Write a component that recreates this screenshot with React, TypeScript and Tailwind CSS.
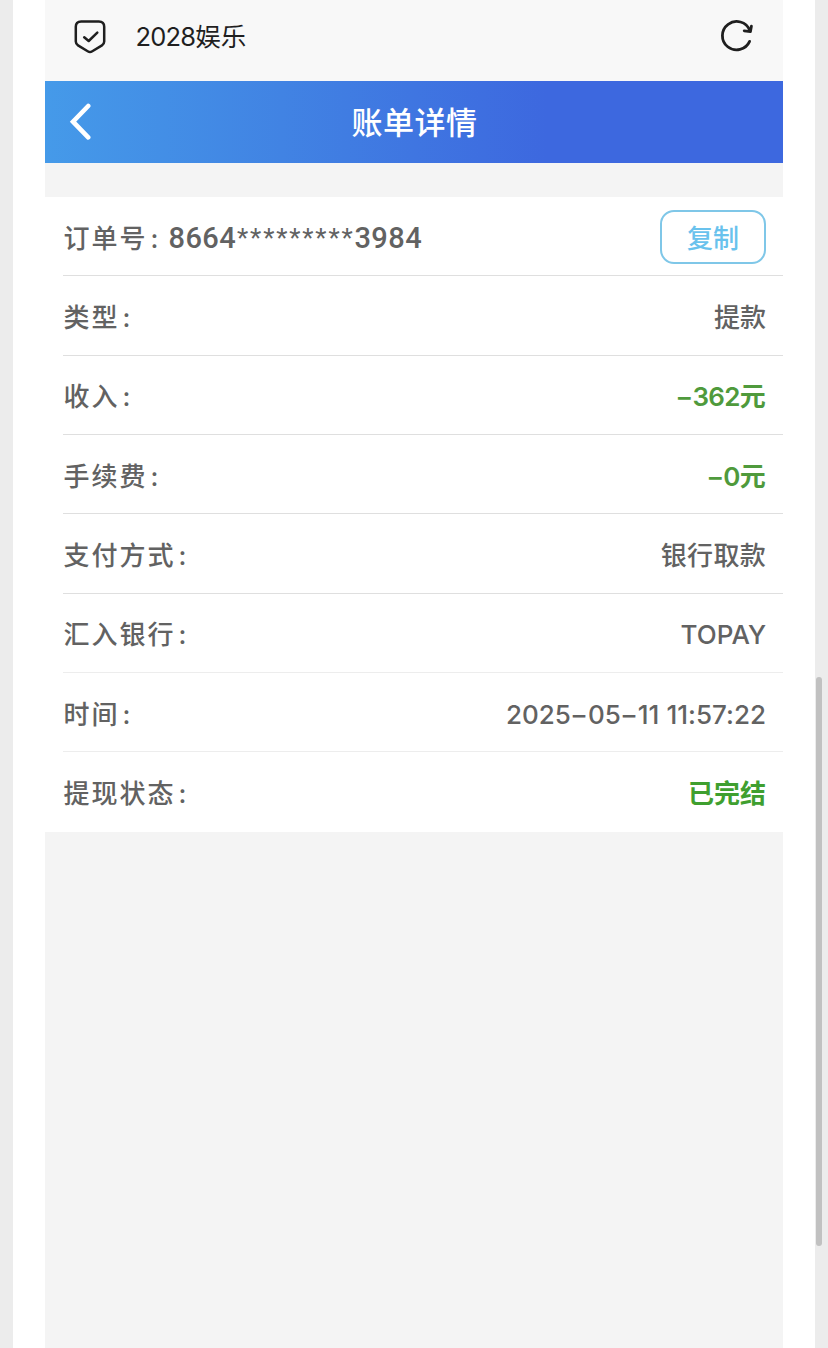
import { clsx } from 'clsx';

interface BillRow {
  label: string;
  value: string;
  valueClass: string;
}

const rows: BillRow[] = [
  { label: '类型', value: '提款', valueClass: 'text-[#626262]' },
  { label: '收入', value: '-362元', valueClass: 'pr-[1px] font-semibold text-[#4f9a3c] tracking-[-0.7px]' },
  { label: '手续费', value: '-0元', valueClass: 'pr-[1px] font-semibold text-[#4f9a3c] tracking-[-0.7px]' },
  { label: '支付方式', value: '银行取款', valueClass: 'text-[#626262] tracking-[0.3px]' },
  { label: '汇入银行', value: 'TOPAY', valueClass: 'text-[#626262] tracking-[0px]' },
  { label: '时间', value: '2025-05-11 11:57:22', valueClass: 'text-[#626262] tracking-[0.02px]' },
  { label: '提现状态', value: '已完结', valueClass: 'font-semibold text-[#3f9f2f]' },
];

function Label({ text }: { text: string }) {
  return (
    <span className="flex pl-[0.5px] text-[26px] tracking-[2px]">
      {text}
      <span className="w-[21px] pl-[3px]">:</span>
    </span>
  );
}

// hyphens are drawn wider than the font has them
function Value({ text }: { text: string }) {
  return (
    <span className="whitespace-pre">
      {text.split(/(-)/).map((part, i) =>
        part === '-' ? (
          <span key={i} className="inline-block w-[17px] text-center">
            <span className="inline-block scale-x-150">-</span>
          </span>
        ) : (
          part
        )
      )}
    </span>
  );
}

export default function App() {
  return (
    <div className="relative flex h-[1348px] w-[828px] justify-center overflow-hidden bg-[#ececec] pl-[13px] pr-[13px] font-['Inter','Noto_Sans_CJK_SC',sans-serif]">
      <div className="w-[802px] bg-white px-8">
        <div className="flex h-full w-[738px] flex-col bg-[#f4f4f4]">
          <div className="flex h-[81px] shrink-0 items-start bg-[#f8f8f8] pl-[29px] pr-[29px] pt-[18px] text-[#1f1f1f]">
            <svg width="32" height="37" viewBox="0 0 32 37" fill="none" stroke="currentColor" strokeWidth="2.5" strokeLinecap="round" strokeLinejoin="round">
              <path d="M7.2 3.4h17.6q5.4 0 5.4 5.4v14.8q0 2.5-2.2 3.8l-9.7 5.9q-2.3 1.4-4.6 0L4 27.4q-2.2-1.3-2.2-3.8V8.8q0-5.4 5.4-5.4z" />
              <path d="M10.2 19.2l4.5 3.8 8.6-8.3" />
            </svg>
            <span className="ml-[29.5px] flex-1 text-[25.5px] leading-[37px]">
              <span className="tracking-[-0.8px]">2028</span>娱乐
            </span>
            <svg width="34" height="36" viewBox="0 0 34 36" fill="none" stroke="currentColor" strokeWidth="2.8" strokeLinecap="round" strokeLinejoin="round">
              <path d="M29.6 23.4A14.2 14.2 0 1 1 29.8 12.4" />
              <path d="M24.2 12.8l6.2.9 1-5.5" />
            </svg>
          </div>

          <div className="flex h-[82px] shrink-0 items-center bg-[linear-gradient(90deg,#459ae9_0%,#4183e3_32%,#3d68df_68%,#3d68df_100%)] text-white">
            <svg className="ml-[24px]" width="24" height="38" viewBox="0 0 24 38" fill="none" stroke="currentColor" strokeWidth="4.6" strokeLinecap="round" strokeLinejoin="miter">
              <path d="M19.2 3L4 18.7l15.2 15.7" />
            </svg>
            <h1 className="flex-1 pr-[47px] text-center text-[31px] font-medium leading-none tracking-[0.5px]">账单详情</h1>
          </div>

          <div className="mt-[34px] grid h-[634.5px] shrink-0 grid-rows-8 bg-white pl-[18px] text-[26px] font-medium leading-none text-[#626262]">
            <div className="flex items-center border-b border-[#dfdfdf] pr-[17px] pt-[2px]">
              <span className="pt-[3px]">
                <Label text="订单号" />
              </span>
              <span className="flex flex-1 items-center pt-[2px] font-['Roboto'] text-[29px] tracking-[0.4px]">
                8664
                <span className="pl-[1px] text-[26px] font-normal tracking-[1.85px]">*********</span>
                3984
              </span>
              <button className="h-[54px] w-[106px] rounded-[14px] border-2 border-[#7fc7e8] pt-[4px] text-[26px] text-[#69c2ed]">复制</button>
            </div>
            {rows.map((row, i) => (
              <div
                key={row.label}
                className={clsx(
                  'flex items-center justify-between pr-[17px] pt-[5px]',
                  i < 4 && 'border-b border-[#dfdfdf]',
                  (i === 4 || i === 5) && 'border-b border-[#ededed]'
                )}
              >
                <Label text={row.label} />
                <span className={row.valueClass}>
                  <Value text={row.value} />
                </span>
              </div>
            ))}
          </div>
        </div>
      </div>

      {/* scrollbar thumb */}
      <div className="absolute right-[6px] top-[677px] h-[569px] w-[6px] rounded-full bg-[#c1c1c1]" />
    </div>
  );
}
